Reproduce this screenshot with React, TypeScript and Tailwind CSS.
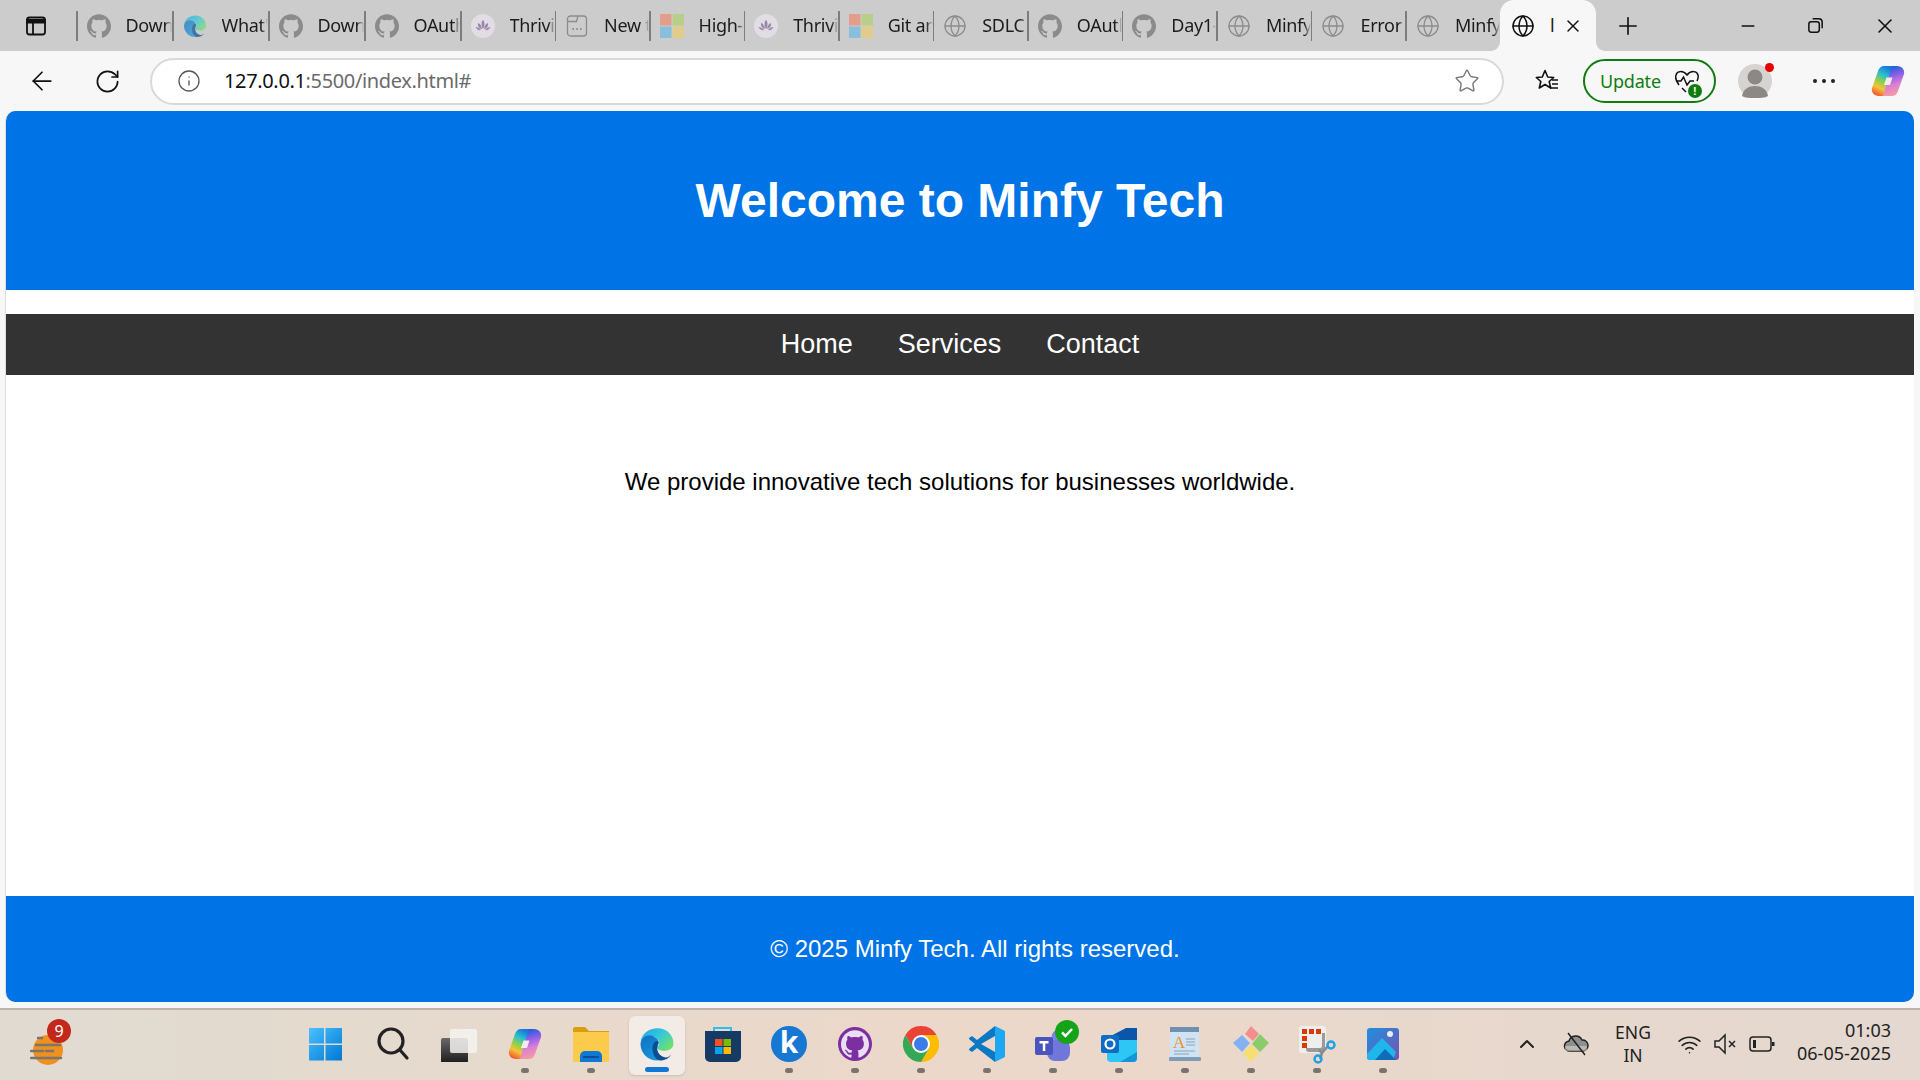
import { ReactNode } from "react";
import { SiGithub } from "react-icons/si";
import { Globe, ArrowLeft, RotateCw, Info, Star, Plus, X, Minus, ChevronUp, Wifi } from "lucide-react";

function MsLogo() {
  return (
    <svg viewBox="0 0 24 24" className="w-6 h-6 shrink-0 opacity-80">
      <rect x="0" y="0" width="11.5" height="11.5" fill="#e8927c" />
      <rect x="12.5" y="0" width="11.5" height="11.5" fill="#b4d07a" />
      <rect x="0" y="12.5" width="11.5" height="11.5" fill="#79bde0" />
      <rect x="12.5" y="12.5" width="11.5" height="11.5" fill="#e8cd7c" />
    </svg>
  );
}

function Lotus() {
  return (
    <svg viewBox="0 0 24 24" className="w-6 h-6 shrink-0">
      <circle cx="12" cy="12" r="12" fill="#e2dde4" />
      <path d="M12 6c2 2 2 6 0 9c-2-3-2-7 0-9zM7 9c2 .5 3.500 3 4 6c-3-.5-4.500-3-4-6zM17 9c-2 .5-3.500 3-4 6c3-.5 4.500-3 4-6zM4.500 13c2 0 4 1 5.500 3c-2.500.5-4.500-.5-5.500-3zM19.500 13c-2 0-4 1-5.500 3c2.500.5 4.500-.5 5.500-3z" fill="#9a86ab" />
    </svg>
  );
}

function PageIcon() {
  return (
    <svg viewBox="0 0 24 24" className="w-6 h-6 shrink-0" fill="none" stroke="#8c8c8c" strokeWidth="1.3">
      <rect x="2.500" y="2" width="19" height="20" rx="3" />
      <path d="M2.500 7.500h9l1.500-5.500" />
      <path d="M7.500 15h1.500M11.300 15h1.500M15 15h1.500" strokeWidth="1.800" />
    </svg>
  );
}

function EdgeIcon({ id, className }: { id: string; className: string }) {
  return (
    <svg viewBox="0 0 48 48" className={className}>
      <defs>
        <linearGradient id={id + "a"} x1="0" y1="0" x2="1" y2="0.7">
          <stop offset="0" stopColor="#1fa5e8" />
          <stop offset="0.55" stopColor="#35c9d8" />
          <stop offset="1" stopColor="#6fe06c" />
        </linearGradient>
        <linearGradient id={id + "b"} x1="0" y1="0" x2="0.8" y2="1">
          <stop offset="0" stopColor="#0f6fc0" />
          <stop offset="1" stopColor="#1a9be0" />
        </linearGradient>
      </defs>
      <path d="M25 3C37 3 46 12 46 23C46 30 40 33 34 33C28 33 24 31 24 29C24 27 27 27 27 23C27 17 21 13 14 13C9 13 5 16 2 21C4 10 13 3 25 3Z" fill={`url(#${id}a)`} />
      <path d="M2 24C3 14 13 10 20 14C26 17 27 21 25 26C22 33 26 40 33 43C29 45 26 46 24 46C12 46 2 36 2 24Z" fill={`url(#${id}b)`} />
      <path d="M18 30C18 22 23 18 26 21C27 23 25 25 24.500 27C23 33 27 41 36 42C39 42 41 40 43 38C40 43 35 46 28 46C22 45 18 38 18 30Z" fill="#0a4f92" />
    </svg>
  );
}

function CopilotIcon({ className }: { className: string }) {
  return (
    <svg viewBox="0 0 36 36" className={className}>
      <defs>
        <linearGradient id="cpa" x1="0.65" y1="0" x2="0.3" y2="1">
          <stop offset="0" stopColor="#1478e0" />
          <stop offset="0.3" stopColor="#2fc0cc" />
          <stop offset="0.52" stopColor="#8cd04c" />
          <stop offset="0.74" stopColor="#f5c33a" />
          <stop offset="1" stopColor="#f2582e" />
        </linearGradient>
        <linearGradient id="cpb" x1="0.4" y1="0" x2="0.6" y2="1">
          <stop offset="0" stopColor="#1560d8" />
          <stop offset="0.32" stopColor="#8b5fe8" />
          <stop offset="0.62" stopColor="#dc7ed4" />
          <stop offset="1" stopColor="#f6a09c" />
        </linearGradient>
      </defs>
      <path d="M14 3h9L14 33H9C4 33 1 29 2 25L8 8C9 5 11 3 14 3z" fill="url(#cpa)" />
      <path d="M22 33h-9L22 3h5C32 3 35 7 34 11L28 28C27 31 25 33 22 33z" fill="url(#cpb)" />
      <path d="M16.500 14.500h6l-2.500 7.500h-6z" fill="#fbf3f2" fillOpacity="0.92" />
    </svg>
  );
}

const tabs: { icon: string; label: string }[] = [
  { icon: "gh", label: "Down" },
  { icon: "edge", label: "What'" },
  { icon: "gh", label: "Down" },
  { icon: "gh", label: "OAuth" },
  { icon: "lotus", label: "Thrivi" },
  { icon: "page", label: "New t" },
  { icon: "ms", label: "High-" },
  { icon: "lotus", label: "Thrivi" },
  { icon: "ms", label: "Git an" },
  { icon: "globe", label: "SDLC" },
  { icon: "gh", label: "OAuth" },
  { icon: "gh", label: "Day1-" },
  { icon: "globe", label: "Minfy" },
  { icon: "globe", label: "Error" },
  { icon: "globe", label: "Minfy" },
];

function TabIcon({ icon }: { icon: string }) {
  if (icon === "gh") return <SiGithub className="w-6 h-6 shrink-0 text-[#8b8b8b]" />;
  if (icon === "edge") return <EdgeIcon id="tabedge" className="w-6 h-6 shrink-0 opacity-70" />;
  if (icon === "lotus") return <Lotus />;
  if (icon === "page") return <PageIcon />;
  if (icon === "ms") return <MsLogo />;
  return <Globe className="w-6 h-6 shrink-0 text-[#8c8c8c]" strokeWidth={1.3} />;
}

function TabStrip() {
  return (
    <div className="h-[51px] bg-[#cccccc] flex items-stretch shrink-0">
      <div className="w-[76px] flex items-center justify-center pr-[4px]">
        <svg viewBox="0 0 24 24" className="w-[24px] h-[24px]" fill="none" stroke="#111" strokeWidth="1.800">
          <rect x="3" y="3.500" width="18" height="17" rx="2.500" />
          <path d="M9 8.500v12" />
          <path d="M3 6h18v2.500H3z" fill="#111" />
        </svg>
      </div>
      <div className="flex w-[1424px]">
        {tabs.map((t, i) => (
          <div key={i} className={i < 4 ? "w-[96px] shrink-0 flex items-center" : "flex-1 min-w-0 flex items-center"}>
            <div className="w-[1.500px] h-[30px] bg-[#7d7d7d] shrink-0" />
            <div className="ml-[9px]">
              <TabIcon icon={t.icon} />
            </div>
            <div className="ml-[15px] flex-1 min-w-0 overflow-hidden [mask-image:linear-gradient(to_right,black_85%,transparent)]">
              <span className="text-[18px] text-[#1c1c1c] whitespace-nowrap tracking-[-0.3px]">{t.label}</span>
            </div>
          </div>
        ))}
      </div>
      <div className="relative w-[96px] bg-[#f7f7f7] rounded-t-[14px] flex items-center pl-[11px]">
        <Globe className="w-6 h-6 text-[#111]" strokeWidth={1.5} />
        <span className="ml-[15px] text-[18px] text-[#1c1c1c]">l</span>
        <X className="w-[20px] h-[20px] ml-[8px] text-[#111]" strokeWidth={1.800} />
        <svg viewBox="0 0 10 10" className="absolute bottom-0 -left-[10px] w-[10px] h-[10px]">
          <path d="M10 0v10H0c6 0 10-4 10-10z" fill="#f7f7f7" />
        </svg>
        <svg viewBox="0 0 10 10" className="absolute bottom-0 -right-[10px] w-[10px] h-[10px]">
          <path d="M0 0v10h10C4 10 0 6 0 0z" fill="#f7f7f7" />
        </svg>
      </div>
      <div className="flex items-center ml-[18px]">
        <Plus className="w-[28px] h-[28px] text-[#111]" strokeWidth={1.400} />
      </div>
      <div className="flex-1" />
      <div className="flex items-center pr-[23px] gap-[48px]">
        <Minus className="w-[20px] h-[20px] text-[#111]" strokeWidth={1.800} />
        <svg viewBox="0 0 20 20" className="w-[19px] h-[19px]" fill="none" stroke="#111" strokeWidth="1.600">
          <rect x="3" y="6" width="11" height="11" rx="2.500" />
          <path d="M7 3h6.500A3.500 3.500 0 0 1 17 6.500V13" />
        </svg>
        <X className="w-[24px] h-[24px] text-[#111]" strokeWidth={1.600} />
      </div>
    </div>
  );
}

function Toolbar() {
  return (
    <div className="h-[60px] flex items-center shrink-0 relative">
      <div className="w-[150px] flex items-center pl-[27px] gap-[37px]">
        <ArrowLeft className="w-[30px] h-[30px] text-[#111]" strokeWidth={1.400} />
        <RotateCw className="w-[27px] h-[27px] text-[#111]" strokeWidth={1.500} />
      </div>
      <div className="w-[1354px] h-[47px] bg-white border-2 border-[#d9d9d9] rounded-full flex items-center pl-[25px] pr-[22px]">
        <Info className="w-[24px] h-[24px] text-[#555]" strokeWidth={1.300} />
        <span className="ml-[23px] text-[20px] tracking-[-0.35px] text-[#111]">
          127.0.0.1<span className="text-[#6b6b6b]">:5500/index.html#</span>
        </span>
        <div className="flex-1" />
        <Star className="w-[26px] h-[26px] text-[#777]" strokeWidth={1.300} />
      </div>
      <div className="ml-[30px] w-[26px] shrink-0">
        <svg viewBox="0 0 26 26" className="w-[26px] h-[26px]" fill="none" stroke="#111" strokeWidth="1.600" strokeLinejoin="round">
          <path d="M11 2.500l2.700 6.500 6 .5-4.500 4 1.500 6.500-5.700-3.500-5.700 3.500 1.500-6.500-4.500-4 6-.5z" />
          <path d="M18 12h6M18 16h6M16 20h8" />
        </svg>
      </div>
      <div className="ml-[23px] w-[133px] h-[44px] shrink-0 border-2 border-[#107c10] rounded-full flex items-center pl-[15px]">
        <span className="text-[18px] tracking-[-0.2px] text-[#107c10]">Update</span>
        <div className="relative ml-[13px] w-[26px] h-[26px]">
          <svg viewBox="0 0 26 26" className="w-[26px] h-[26px]" fill="none" stroke="#111" strokeWidth="1.500">
            <path d="M5 17C2 13 1 10 2 7c1-4 7-5 11 0c4-5 10-4 11 0c.5 2 0 4-1 6" />
            <path d="M2 13h5l2.500-4 3.500 8 3-4h4" />
            <path d="M8 20l4 4" />
          </svg>
          <span className="absolute -right-[2px] -bottom-[4px] w-[14px] h-[14px] rounded-full bg-[#107c10] text-white text-[11px] font-bold flex items-center justify-center font-['Liberation_Sans',sans-serif]">!</span>
        </div>
      </div>
      <div className="ml-[22px] relative w-[34px] h-[34px] shrink-0 rounded-full bg-[#d6d4d1] overflow-visible">
        <svg viewBox="0 0 34 34" className="w-[34px] h-[34px]">
          <circle cx="17" cy="13" r="7.500" fill="#8c8885" />
          <path d="M4 32c1-7 7-10 13-10s12 3 13 10c-3 2-8 2-13 2s-10 0-13-2z" fill="#8c8885" />
        </svg>
        <span className="absolute -right-[2px] -top-[1px] w-[9px] h-[9px] rounded-full bg-[#e60000]" />
      </div>
      <div className="ml-[41px] flex gap-[5px] shrink-0">
        <span className="w-[4px] h-[4px] rounded-full bg-[#222]" />
        <span className="w-[4px] h-[4px] rounded-full bg-[#222]" />
        <span className="w-[4px] h-[4px] rounded-full bg-[#222]" />
      </div>
      <div className="ml-[35px] shrink-0">
        <CopilotIcon className="w-[36px] h-[38px]" />
      </div>
    </div>
  );
}

function Page() {
  return (
    <div className="flex-1 ml-[5px] mr-[6px] mb-[6px] border-l border-[#dddddd] bg-white rounded-[10px] overflow-hidden flex flex-col font-['Liberation_Sans',Arial,sans-serif]">
      <header className="h-[179px] shrink-0 bg-[#0073e6] flex items-center justify-center">
        <h1 className="text-[48px] font-bold text-white">Welcome to Minfy Tech</h1>
      </header>
      <nav className="mt-[24px] h-[61px] shrink-0 bg-[#333333] flex items-center justify-center gap-[45px]">
        <a href="#" className="text-[27px] text-white">Home</a>
        <a href="#" className="text-[27px] text-white">Services</a>
        <a href="#" className="text-[27px] text-white">Contact</a>
      </nav>
      <main className="flex-1 pt-[89px]">
        <p className="text-[24px] text-black text-center">We provide innovative tech solutions for businesses worldwide.</p>
      </main>
      <footer className="h-[106px] shrink-0 bg-[#0073e6] flex items-center justify-center pl-[30px]">
        <p className="text-[24px] text-white">© 2025 Minfy Tech. All rights reserved.</p>
      </footer>
    </div>
  );
}

function Slot({ children, dot, active }: { children: ReactNode; dot?: boolean; active?: boolean }) {
  return (
    <div className="relative w-[66px] h-full flex items-center justify-center">
      {active && <div className="absolute left-[5px] right-[5px] top-[6px] bottom-[5px] bg-[#f3ebe5] rounded-[6px] shadow-sm" />}
      <div className="relative w-[36px] h-[36px] flex items-center justify-center mb-[2px]">{children}</div>
      {dot && <div className="absolute bottom-[7px] left-[29px] w-[8px] h-[5px] rounded-full bg-[#7b746e]" />}
      {active && <div className="absolute bottom-[8px] left-[21px] w-[24px] h-[5px] rounded-full bg-[#0f78d4]" />}
    </div>
  );
}

function Taskbar() {
  return (
    <div className="h-[72px] shrink-0 border-t-2 border-[#bdb3aa] bg-linear-to-r from-[#e0dbd1] via-[#ecd8c9] to-[#e4d8d0] flex items-stretch relative font-['Noto_Sans',sans-serif]">
      {/* weather widget */}
      <div className="w-[294px] shrink-0 pl-[30px] pt-[10px]">
        <div className="relative w-[40px] h-[50px]">
          <svg viewBox="0 0 40 50" className="absolute left-0 top-0 w-[40px] h-[50px]">
            <circle cx="18" cy="30" r="15" fill="#f0901e" />
            <path d="M8 18h4M6 25h24M1 31h12M16 31h7M1 38h30" stroke="#7a7570" strokeWidth="2.500" strokeLinecap="round" />
          </svg>
          <span className="absolute left-[17px] -top-[1px] w-[24px] h-[24px] rounded-full bg-[#c4281c] text-white text-[16px] flex items-center justify-center">9</span>
        </div>
      </div>

      <div className="flex items-stretch">
        <Slot>
          <svg viewBox="2 0 36 36" className="w-[36px] h-[36px]">
            <defs>
              <linearGradient id="win" x1="0" y1="0" x2="1" y2="1">
                <stop offset="0" stopColor="#4cc2ff" />
                <stop offset="1" stopColor="#0078d4" />
              </linearGradient>
            </defs>
            <path d="M1 2h16v15.500H1zM18.500 2H35v15.500H18.500zM1 19h16v15.500H1zM18.500 19H35v15.500H18.500z" fill="url(#win)" />
          </svg>
        </Slot>
        <Slot>
          <svg viewBox="0 0 36 36" className="w-[36px] h-[36px]" fill="none" stroke="#222" strokeWidth="3.200" strokeLinecap="round">
            <circle cx="16" cy="15" r="12" />
            <path d="M25 24l7 8" />
          </svg>
        </Slot>
        <Slot>
          <svg viewBox="0 0 36 36" className="w-[36px] h-[36px]">
            <defs>
              <linearGradient id="task" x1="0" y1="0" x2="0" y2="1">
                <stop offset="0" stopColor="#6a6a6a" />
                <stop offset="1" stopColor="#1c1c1c" />
              </linearGradient>
            </defs>
            <rect x="0" y="12" width="27" height="25" rx="2" fill="url(#task)" />
            <rect x="9" y="3" width="27" height="24" rx="2" fill="#f4f2f0" fillOpacity="0.85" />
          </svg>
        </Slot>
        <Slot dot>
          <CopilotIcon className="w-[38px] h-[40px]" />
        </Slot>
        <Slot dot>
          <svg viewBox="0 0 36 36" className="w-[36px] h-[36px]">
            <path d="M0 3a2 2 0 0 1 2-2h10l4 4h20v6H0z" fill="#d99d10" />
            <path d="M0 6h36v30H0z" fill="#fdcb4c" />
            <path d="M7 36v-6a5 5 0 0 1 5-5h12a5 5 0 0 1 5 5v6z" fill="#0f78d4" />
            <rect x="10" y="30" width="16" height="2" fill="#0a4f92" />
          </svg>
        </Slot>
        <Slot active>
          <EdgeIcon id="barEdge" className="w-[38px] h-[38px]" />
        </Slot>
        <Slot>
          <svg viewBox="0 0 36 36" className="w-[36px] h-[36px]">
            <path d="M9 8V2h17v6" fill="none" stroke="#2cc0ef" strokeWidth="2" />
            <path d="M0 5h36v26a5 5 0 0 1-5 5H5a5 5 0 0 1-5-5z" fill="#153a66" />
            <rect x="10" y="13" width="7.500" height="7" fill="#f25022" />
            <rect x="18.500" y="13" width="7.500" height="7" fill="#7fba00" />
            <rect x="10" y="21" width="7.500" height="7" fill="#00a4ef" />
            <rect x="18.500" y="21" width="7.500" height="7" fill="#ffb900" />
          </svg>
        </Slot>
        <Slot dot>
          <div className="w-[36px] h-[36px] rounded-full bg-[#1678d2] text-white flex items-center justify-center text-[30px] font-bold leading-none pb-[4px]">k</div>
        </Slot>
        <Slot dot>
          <div className="w-[34px] h-[34px] rounded-full bg-[#7b2fa0] flex items-center justify-center">
            <SiGithub className="w-[28px] h-[28px] text-[#e9dff0]" />
          </div>
        </Slot>
        <Slot dot>
          <svg viewBox="0 0 36 36" className="w-[36px] h-[36px]">
            <path d="M2.410 9A18 18 0 0 1 33.590 9H18L10.200 22.500z" fill="#ea4335" />
            <path d="M33.590 9A18 18 0 0 1 18 36L25.800 22.500L18 9z" fill="#fbbc04" />
            <path d="M2.410 9L10.200 22.500H25.800L18 36A18 18 0 0 1 2.410 9z" fill="#34a853" />
            <circle cx="18" cy="18" r="9" fill="#fff" />
            <circle cx="18" cy="18" r="7" fill="#3a7de8" />
          </svg>
        </Slot>
        <Slot dot>
          <svg viewBox="0 0 36 36" className="w-[36px] h-[36px]">
            <path d="M26 0l10 5v26l-10 5V0z" fill="#1fa8f1" />
            <path d="M26 0v10L12 18l14 8v10L8 22l-5 4-3-2v-1l6-5-6-5v-1l3-2 5 4z" fill="#0a78c2" />
          </svg>
        </Slot>
        <Slot dot>
          <svg viewBox="0 0 36 36" className="w-[36px] h-[36px] overflow-visible">
            <circle cx="24" cy="11" r="7.500" fill="#7b83eb" />
            <rect x="12" y="14" width="23" height="21" rx="8" fill="#7077d8" />
            <rect x="0" y="11" width="18" height="18" rx="2" fill="#4b53bc" />
            <rect x="4.500" y="15" width="9" height="2.500" fill="#fff" />
            <rect x="7.800" y="15" width="2.500" height="10" fill="#fff" />
          </svg>
          <svg viewBox="0 0 24 24" className="absolute -right-[8px] -top-[6px] w-[24px] h-[24px]">
            <circle cx="12" cy="12" r="12" fill="#15a31a" />
            <path d="M7 12.500l3.500 3.500 6.500-7" fill="none" stroke="#fff" strokeWidth="2.500" />
          </svg>
        </Slot>
        <Slot dot>
          <svg viewBox="0 0 36 36" className="w-[36px] h-[36px]">
            <path d="M6 12L25 2h11v14l-12 8z" fill="#0a56a8" />
            <path d="M6 14h30v18a4 4 0 0 1-4 4H10a4 4 0 0 1-4-4z" fill="#2ec7f5" />
            <path d="M19 36L36 26v6a4 4 0 0 1-4 4z" fill="#1594da" />
            <rect x="0" y="9" width="18" height="18" rx="2" fill="#0f6cc4" />
            <circle cx="9" cy="18" r="4.500" fill="none" stroke="#fff" strokeWidth="2.200" />
          </svg>
        </Slot>
        <Slot dot>
          <svg viewBox="0 0 36 36" className="w-[36px] h-[36px]">
            <rect x="3" y="1" width="29" height="33" rx="1" fill="#cfe3f3" />
            <rect x="3" y="1" width="29" height="5" fill="#6f90b0" />
            <rect x="2" y="31" width="32" height="4" rx="1" fill="#7f9db8" />
            <text x="6" y="22" fontSize="17" fill="#f0912c" fontFamily="Liberation Serif, serif">A</text>
            <path d="M19 13h9M19 16h9M19 19h9M7 25h21M7 28h15" stroke="#8aa2b8" strokeWidth="1.200" />
          </svg>
        </Slot>
        <Slot dot>
          <svg viewBox="0 0 36 36" className="w-[36px] h-[36px]">
            <path d="M18 0l8 8-6 7-8-7z" fill="#f48e8c" />
            <path d="M9 9l8 8-8 9-9-9z" fill="#82b2f4" />
            <path d="M27 8l9 9-9 9-8-8z" fill="#8ccb6c" />
            <path d="M18 19l8 8-8 9-8-9z" fill="#f7de70" />
          </svg>
        </Slot>
        <Slot dot>
          <svg viewBox="0 0 36 36" className="w-[36px] h-[36px] overflow-visible">
            <rect x="0" y="0" width="27" height="27" rx="3" fill="#eeeeee" />
            <rect x="3" y="3" width="5" height="5" fill="#d83b01" />
            <rect x="10" y="3" width="5" height="5" fill="#d83b01" />
            <rect x="17" y="3" width="5" height="5" fill="#d83b01" />
            <rect x="3" y="10" width="5" height="5" fill="#d83b01" />
            <rect x="3" y="17" width="5" height="5" fill="#d83b01" />
            <path d="M7 22h14a2 2 0 0 0 2-2V7h3v16a3 3 0 0 1-3 3H10a3 3 0 0 1-3-3z" fill="#9a9a9a" />
            <path d="M20 24l3 3-2 6M23 27l6-7" stroke="#8a8a8a" strokeWidth="2.500" fill="none" />
            <circle cx="32" cy="19" r="3.500" fill="none" stroke="#1ea0e6" strokeWidth="2.400" />
            <circle cx="19" cy="33" r="3.500" fill="none" stroke="#1ea0e6" strokeWidth="2.400" />
          </svg>
        </Slot>
        <Slot dot>
          <svg viewBox="0 0 32 32" className="w-[32px] h-[32px]">
            <defs>
              <linearGradient id="pho" x1="0" y1="0" x2="1" y2="1">
                <stop offset="0" stopColor="#1f8fe0" />
                <stop offset="1" stopColor="#7a52b0" />
              </linearGradient>
            </defs>
            <rect x="0" y="0" width="32" height="32" rx="3" fill="url(#pho)" />
            <circle cx="23" cy="6" r="3" fill="#e6eefa" />
            <path d="M0 26L15 10l14 14-3 8H3a3 3 0 0 1-3-3z" fill="#1fb7ea" />
            <path d="M8 32l10-11 11 11z" fill="#0f6cb8" />
          </svg>
        </Slot>
      </div>

      {/* system tray */}
      <div className="flex-1 relative text-[#222]">
        <div className="absolute inset-0 flex items-center pl-[99px] pb-[2px]">
          <ChevronUp className="w-[24px] h-[24px]" strokeWidth={2} />
          <div className="ml-[24px] w-[26px] h-[26px]">
            <svg viewBox="0 0 26 26" className="w-[26px] h-[26px]">
              <path d="M7 20a5 5 0 0 1-1-10a7 7 0 0 1 13-1a5.500 5.500 0 0 1 1 11z" fill="#8f8f8f" stroke="#222" strokeWidth="1.500" />
              <path d="M2 15h22v5H2z" fill="#e6e1da" fillOpacity="0.5" />
              <path d="M5 2l17 22" stroke="#222" strokeWidth="1.500" />
            </svg>
          </div>
          <div className="ml-[24px] w-[40px] text-center text-[17.500px] leading-[23px]">
            <div>ENG</div>
            <div>IN</div>
          </div>
          <Wifi className="ml-[24px] w-[25px] h-[25px]" strokeWidth={1.500} />
          <svg viewBox="0 0 24 24" className="ml-[11px] w-[24px] h-[24px]" fill="none" stroke="#222" strokeWidth="1.500">
            <path d="M2 9h4l6-6v18l-6-6H2z" />
            <path d="M16 9l6 6M22 9l-6 6" />
          </svg>
          <svg viewBox="0 0 26 20" className="ml-[12px] w-[26px] h-[20px]" fill="none" stroke="#222" strokeWidth="1.500">
            <rect x="1" y="3" width="21" height="14" rx="3" />
            <rect x="4" y="6" width="3" height="8" fill="#222" stroke="none" />
            <rect x="23" y="8" width="2.500" height="4" fill="#222" stroke="none" />
          </svg>
        </div>
        <div className="absolute right-[29px] top-[9px] text-right text-[18px] leading-[23px]">
          <div>01:03</div>
          <div>06-05-2025</div>
        </div>
      </div>
    </div>
  );
}

export default function App() {
  return (
    <div className="w-[1920px] h-[1080px] bg-[#f7f7f7] flex flex-col overflow-hidden font-['Noto_Sans',sans-serif]">
      <TabStrip />
      <Toolbar />
      <Page />
      <Taskbar />
    </div>
  );
}
